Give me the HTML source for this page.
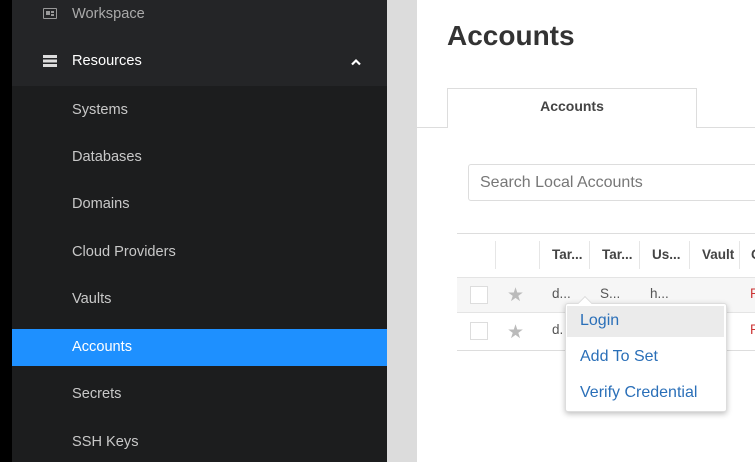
<!DOCTYPE html>
<html><head><style>
*{margin:0;padding:0;box-sizing:border-box}
body{width:755px;height:462px;overflow:hidden;position:relative;font-family:"Liberation Sans",sans-serif;background:#fff}
.a{position:absolute}
.nav{left:12px;width:375px;height:47.5px;color:#c8c8c8;font-size:14.6px;line-height:47.5px;padding-left:60px}
.th{top:233px;height:44px;line-height:44px;font-size:13.5px;font-weight:bold;color:#444}
.sep{top:241px;width:1px;height:28px;background:#e6e6e6}
.cb{width:18px;height:18px;border:1px solid #ddd;background:#fff;left:470px}
.star{left:507px;color:#bbb;font-size:19px}
.td{font-size:13.5px;color:#555}
.pm{left:580px;font-size:16px;color:#2a6fb8}
</style></head><body>
<div class="a" style="left:0;top:0;width:12px;height:462px;background:#000"></div>
<div class="a" style="left:12px;top:0;width:375px;height:86px;background:#242527"></div>
<div class="a" style="left:12px;top:86px;width:375px;height:376px;background:#1c1d1e"></div>
<div class="a" style="left:387px;top:0;width:30px;height:462px;background:#dcdcdc"></div>
<div class="a nav" style="top:-9px;color:#aaa">Workspace</div>
<div class="a" style="left:43px;top:8px;width:14px;height:11px;border:1.5px solid #999;border-radius:1px"><div style="position:absolute;left:1.5px;top:2px;width:4px;height:4px;background:#999"></div><div style="position:absolute;left:7px;top:2px;width:3px;height:1.5px;background:#999"></div><div style="position:absolute;left:7px;top:5px;width:3px;height:1.5px;background:#999"></div></div>
<div class="a nav" style="top:38px;color:#fff">Resources</div>
<div class="a" style="left:43px;top:55px;width:14px;height:12px;background:repeating-linear-gradient(#ddd 0 3px,transparent 3px 4.5px)"></div>
<svg class="a" style="left:350px;top:58px" width="12" height="8"><path d="M2 6.5 L6 2.5 L10 6.5" stroke="#fff" stroke-width="2.2" fill="none"/></svg>
<div class="a nav" style="top:87px">Systems</div>
<div class="a nav" style="top:134px">Databases</div>
<div class="a nav" style="top:181px">Domains</div>
<div class="a nav" style="top:229px">Cloud Providers</div>
<div class="a nav" style="top:276px">Vaults</div>
<div class="a nav" style="top:329px;height:37px;line-height:37px;background:#1e90ff;color:#fff">Accounts</div>
<div class="a nav" style="top:371px">Secrets</div>
<div class="a nav" style="top:419px">SSH Keys</div>

<div class="a" style="left:447px;top:20px;font-size:28px;font-weight:bold;color:#333">Accounts</div>
<div class="a" style="left:417px;top:127px;width:338px;height:1px;background:#ddd"></div>
<div class="a" style="left:447px;top:88px;width:250px;height:40px;border:1px solid #ddd;border-bottom:none;background:#fff;text-align:center;line-height:34px;font-size:14px;font-weight:bold;color:#444">Accounts</div>
<div class="a" style="left:468px;top:164px;width:300px;height:37px;border:1px solid #ddd;border-radius:3px;padding-left:11px;line-height:35px;font-size:16px;color:#777">Search Local Accounts</div>

<div class="a" style="left:457px;top:233px;width:298px;height:1px;background:#ddd"></div>
<div class="a" style="left:457px;top:277px;width:298px;height:36px;background:#f6f6f6;border-top:1px solid #e4e4e4;border-bottom:1px solid #e4e4e4"></div>
<div class="a" style="left:457px;top:350px;width:298px;height:1px;background:#ddd"></div>
<div class="a sep" style="left:495px"></div><div class="a sep" style="left:539px"></div><div class="a sep" style="left:589px"></div><div class="a sep" style="left:639px"></div><div class="a sep" style="left:689px"></div><div class="a sep" style="left:739px"></div>
<div class="a th" style="left:552px">Tar...</div>
<div class="a th" style="left:602px">Tar...</div>
<div class="a th" style="left:652px">Us...</div>
<div class="a th" style="left:702px">Vault</div>
<div class="a th" style="left:751px">C</div>
<div class="a cb" style="top:286px"></div><div class="a cb" style="top:322px"></div>
<div class="a star" style="top:284px">★</div><div class="a star" style="top:321px">★</div>
<div class="a td" style="left:552px;top:286px">d...</div>
<div class="a td" style="left:600px;top:286px">S...</div>
<div class="a td" style="left:650px;top:286px">h...</div>
<div class="a td" style="left:750px;top:286px;color:#c33">P</div>
<div class="a td" style="left:552px;top:322px">d.</div>
<div class="a td" style="left:750px;top:322px;color:#c33">P</div>

<div class="a" style="left:565px;top:303px;width:162px;height:109px;background:#fff;border:1px solid #ddd;border-radius:3px;box-shadow:0 2px 6px rgba(0,0,0,.25)"></div>
<div class="a" style="left:580px;top:298px;width:10px;height:10px;background:#fff;border-left:1px solid #ddd;border-top:1px solid #ddd;transform:rotate(45deg)"></div>
<div class="a" style="left:567px;top:306px;width:157px;height:31px;background:#ebebeb"></div>
<div class="a pm" style="top:312px">Login</div>
<div class="a pm" style="top:348px">Add To Set</div>
<div class="a pm" style="top:384px">Verify Credential</div>
</body></html>
